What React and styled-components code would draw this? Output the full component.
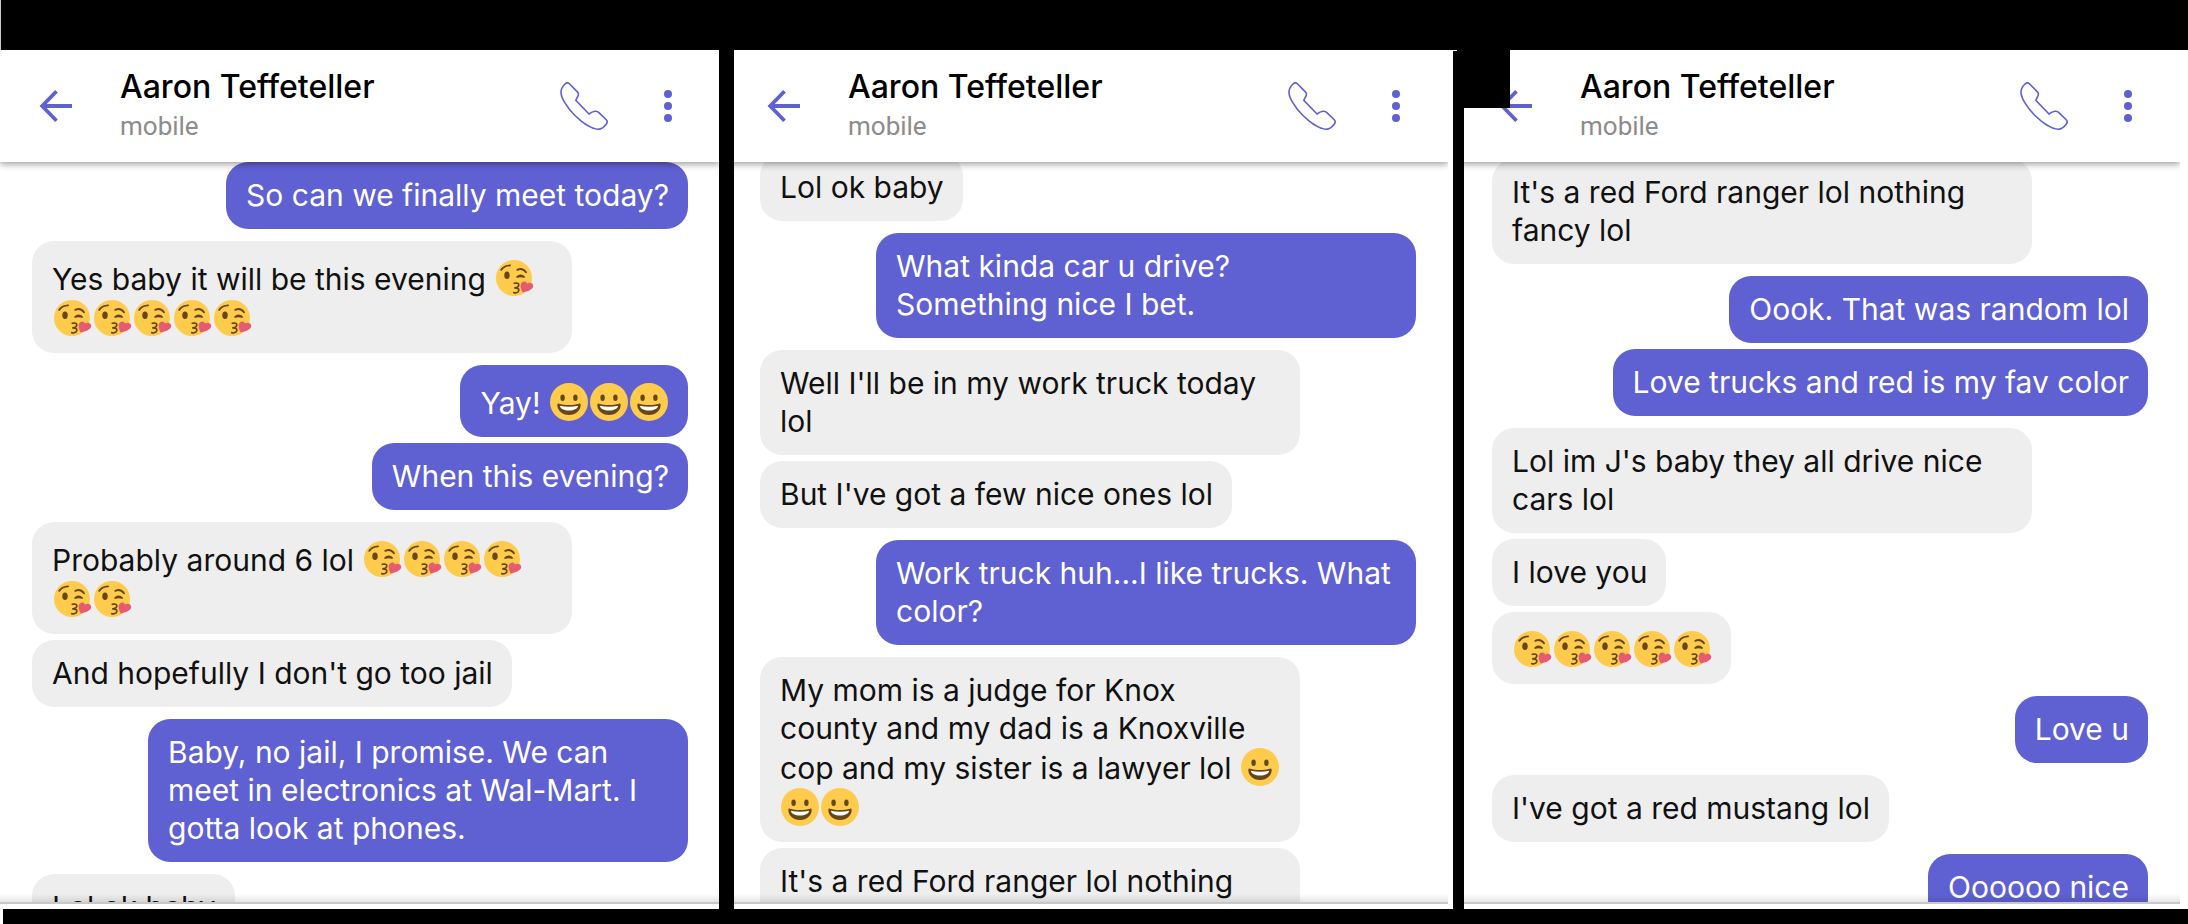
import React from "react";
import styled, { createGlobalStyle, css } from "styled-components";

// left / right: how far each phone screen sits inside (or under) its panel edges
const screens = [
  {
    left: 0,
    right: -1,
    scroll: 0,
    messages: [
      { mine: true, text: "So can we finally meet today?" },
      { emojiTop: true, text: "Yes baby it will be this evening 😘😘😘😘😘😘" },
      { mine: true, emojiTop: true, text: "Yay! 😀😀😀" },
      { mine: true, text: "When this evening?" },
      { emojiTop: true, text: "Probably around 6 lol 😘😘😘😘😘😘" },
      { text: "And hopefully I don't go too jail" },
      {
        mine: true,
        text: "Baby, no jail, I promise. We can meet in electronics at Wal-Mart. I gotta look at phones.",
      },
      { text: "Lol ok baby" },
    ],
  },
  {
    left: -6,
    right: 5,
    scroll: 8,
    messages: [
      { text: "Lol ok baby" },
      { mine: true, full: true, text: "What kinda car u drive?\nSomething nice I bet." },
      { text: "Well I'll be in my work truck today lol" },
      { text: "But I've got a few nice ones lol" },
      { mine: true, text: "Work truck huh...I like trucks. What color?" },
      {
        text: "My mom is a judge for Knox county and my dad is a Knoxville cop and my sister is a lawyer lol 😀😀😀",
      },
      { text: "It's a red Ford ranger lol nothing fancy lol" },
    ],
  },
  {
    left: -4,
    right: 8,
    scroll: 3,
    messages: [
      { text: "It's a red Ford ranger lol nothing fancy lol" },
      { mine: true, text: "Oook. That was random lol" },
      { mine: true, text: "Love trucks and red is my fav color" },
      { text: "Lol im J's baby they all drive nice cars lol" },
      { text: "I love you" },
      { emojiTop: true, text: "😘😘😘😘😘" },
      { mine: true, text: "Love u" },
      { text: "I've got a red mustang lol" },
      { mine: true, text: "Oooooo nice" },
    ],
  },
];

const KissEmoji = () => (
  <Emoji viewBox="0 0 40 40" role="img" aria-label="😘">
    <circle cx="20" cy="20" r="18" fill="#ffcb4c" />
    <ellipse cx="13" cy="17.3" rx="2.7" ry="3.8" fill="#65471b" />
    <g fill="none" stroke="#65471b" strokeLinecap="round">
      <path d="M7.2 11.8Q10.5 7.6 16 7.4" strokeWidth="1.9" />
      <path d="M23.3 11.8Q28.6 9.6 32 14.2" strokeWidth="1.9" />
      <path d="M22.6 19.2Q26.6 15.4 30.6 19.2Q26.6 17.6 22.6 19.2Z" strokeWidth="1.5" />
      <path
        d="M20.3 25.3C23 24.6 25 25.4 24.8 27C24.6 28.8 22.8 29.6 20.8 29.8C23.4 29.8 25.2 30.8 24.8 32.6C24.4 34.6 22 35.1 19.8 34.6"
        strokeWidth="1.7"
        strokeLinejoin="round"
      />
    </g>
    <path
      d="M28.6 34.6C27 31.2 26 28.6 26.9 26.1C27.9 23.2 31.6 22.2 33.1 25.6C36 23.8 39.6 25.4 39.2 28.6C38.8 31.4 34 33.6 28.6 34.6Z"
      fill="#e75a70"
    />
  </Emoji>
);

const GrinEmoji = () => (
  <Emoji viewBox="0 0 40 40" role="img" aria-label="😀">
    <circle cx="20" cy="20" r="19" fill="#ffcb4c" />
    <ellipse cx="13.6" cy="15.7" rx="2.2" ry="3.3" fill="#65471b" />
    <ellipse cx="26.4" cy="15.7" rx="2.2" ry="3.3" fill="#65471b" />
    <path
      d="M20 23C16 23 13 22.4 10 21.7Q8.3 21.3 8.3 23C8.5 28.5 13 33 20 33S31.5 28.5 31.7 23Q31.7 21.3 30 21.7C27 22.4 24 23 20 23Z"
      fill="#65471b"
    />
    <path d="M10.8 23.7Q20 26 29.2 23.7C28.2 27 25 28.4 20 28.4S11.8 27 10.8 23.7Z" fill="#fff" />
  </Emoji>
);

// swap emoji characters for their drawings
const renderText = (text) =>
  text.split(/(😘|😀)/u).map((part, i) => {
    if (part === "😘") return <KissEmoji key={i} />;
    if (part === "😀") return <GrinEmoji key={i} />;
    return part;
  });

const ChatHeader = () => (
  <Header>
    <BackButton aria-label="Back">
      <svg width="34" height="34" viewBox="0 0 34 34" fill="none" stroke="currentColor" strokeWidth="3.8">
        <path d="M33 17H4M17.5 2.2L3.2 17L17.5 31.8" />
      </svg>
    </BackButton>
    <Contact>
      <ContactName>Aaron Teffeteller</ContactName>
      <ContactType>mobile</ContactType>
    </Contact>
    <IconButton aria-label="Call">
      <svg width="48" height="48" viewBox="0 0 48 48" fill="none" stroke="currentColor" strokeWidth="1.6">
        <path d="M5 2Q7.5-.2 9.6 2L17.4 9.9Q19 11.6 18.1 13.6L15.8 18.4L29 32Q32 29.8 35 29.3Q37.3 29 38.9 30.6L46.2 37.8Q48.1 39.8 46.4 42Q42.5 47.3 38 47.2C33 47 24 42.5 15 33.5C6 24.5 1 15 1 10.5Q.9 6 5 2Z" />
      </svg>
    </IconButton>
    <IconButton aria-label="More options">
      <svg width="8" height="32" viewBox="0 0 8 32" fill="currentColor">
        <circle cx="4" cy="4" r="4" />
        <circle cx="4" cy="16" r="4" />
        <circle cx="4" cy="28" r="4" />
      </svg>
    </IconButton>
  </Header>
);

const Phone = ({ left, right, scroll, messages }) => (
  <Panel>
    <Screen $left={left} $right={right}>
      <ChatHeader />
      <Messages>
        <MessageList $scroll={scroll}>
          {messages.map(({ mine, emojiTop, full, text }, i) => (
            <Bubble
              key={i}
              $mine={mine}
              $full={full}
              $grouped={i > 0 && messages[i - 1].mine === mine}
              $emojiTop={emojiTop}
            >
              {renderText(text)}
            </Bubble>
          ))}
        </MessageList>
      </Messages>
    </Screen>
  </Panel>
);

const App = () => {
  return (
    <Page>
      <GlobalStyle />
      <TopBar />
      <Phones>
        <Phone {...screens[0]} />
        <Divider />
        <Phone {...screens[1]} />
        <Divider $notched>
          <Redaction />
        </Divider>
        <Phone {...screens[2]} />
      </Phones>
      <BottomBar />
    </Page>
  );
};

export default App;

const GlobalStyle = createGlobalStyle`
  * {
    box-sizing: border-box;
  }

  body {
    margin: 0;
    background-color: #fff;
    font-family: Inter, "Liberation Sans", sans-serif;
  }
`;

const Page = styled.main`
  height: 100vh;
  display: flex;
  flex-direction: column;
  overflow: hidden;
`;

const TopBar = styled.div`
  flex: 0 0 50px;
  background-color: #000;
  border-left: 1px solid #ccc;
`;

const BottomBar = styled.div`
  flex: 0 0 15px;
  background-color: #000;
  border-left: 3px solid #fff;
`;

const Phones = styled.div`
  flex: 1;
  min-height: 0;
  display: grid;
  grid-template-columns: 719fr 15px 719fr 11px 724fr;
  grid-template-rows: minmax(0, 1fr);
`;

const Divider = styled.div`
  background-color: #000;

  ${(props) =>
    props.$notched &&
    css`
      position: relative;
      z-index: 3;
      margin-top: 1px;
    `}
`;

const Redaction = styled.div`
  position: absolute;
  top: -1px;
  left: 4px;
  width: 53px;
  height: 58px;
  background-color: #000;
`;

const Panel = styled.section`
  display: flex;
  min-width: 0;
  padding-bottom: 5px;
  overflow: hidden;
  background-color: #fff;
`;

const Screen = styled.div`
  flex: 1;
  min-width: 0;
  display: flex;
  flex-direction: column;
  overflow: hidden;
  margin-left: ${(props) => props.$left}px;
  margin-right: ${(props) => props.$right}px;
`;

const Header = styled.header`
  position: relative;
  z-index: 1;
  flex: 0 0 112px;
  display: flex;
  align-items: center;
  padding: 0 48px 0 39px;
  background-color: #fff;
  box-shadow: 0 2px 7px rgba(0, 0, 0, 0.4);
`;

const IconButton = styled.button`
  display: flex;
  margin-left: 56px;
  padding: 0;
  border: none;
  background: none;
  color: #5f61d2;
  cursor: pointer;
`;

const BackButton = styled(IconButton)`
  margin-left: 0;
`;

const Contact = styled.div`
  flex: 1;
  margin-left: 47px;
`;

const ContactName = styled.h2`
  margin: 0;
  font-size: 32px;
  font-weight: 500;
  line-height: 38px;
  color: #000;
`;

const ContactType = styled.p`
  margin: 4px 0 2px;
  font-family: Roboto, sans-serif;
  font-size: 26px;
  line-height: 32px;
  color: #8c8c8c;
`;

const Messages = styled.div`
  position: relative;
  flex: 1;
  min-height: 0;
  overflow: hidden;
  border-bottom: 2px solid #c8c8c8;

  /* soft shade above the input bar */
  &::after {
    content: "";
    position: absolute;
    inset: auto 0 0;
    height: 8px;
    background: linear-gradient(rgba(0, 0, 0, 0), rgba(0, 0, 0, 0.1));
  }
`;

const MessageList = styled.ul`
  display: flex;
  flex-direction: column;
  align-items: flex-start;
  margin: 0;
  margin-top: -${(props) => props.$scroll}px;
  padding: 0 32px;
  list-style: none;
`;

const Bubble = styled.li`
  width: ${(props) => (props.$full ? "100%" : "auto")};
  max-width: 540px;
  margin-top: ${(props) => (props.$grouped ? 6 : 12)}px;
  padding: ${(props) => (props.$emojiTop ? 17 : 14)}px 19px 15px 20px;
  border-radius: 22px;
  background-color: #eee;
  color: #111;
  font-size: 30px;
  line-height: 38px;
  white-space: pre-line;

  &:first-child {
    margin-top: 0;
  }

  ${(props) =>
    props.$mine &&
    css`
      align-self: flex-end;
      background-color: #5f61d2;
      color: #fff;
    `}
`;

const Emoji = styled.svg`
  display: inline-block;
  width: 40px;
  height: 40px;
  vertical-align: -8px;
`;
